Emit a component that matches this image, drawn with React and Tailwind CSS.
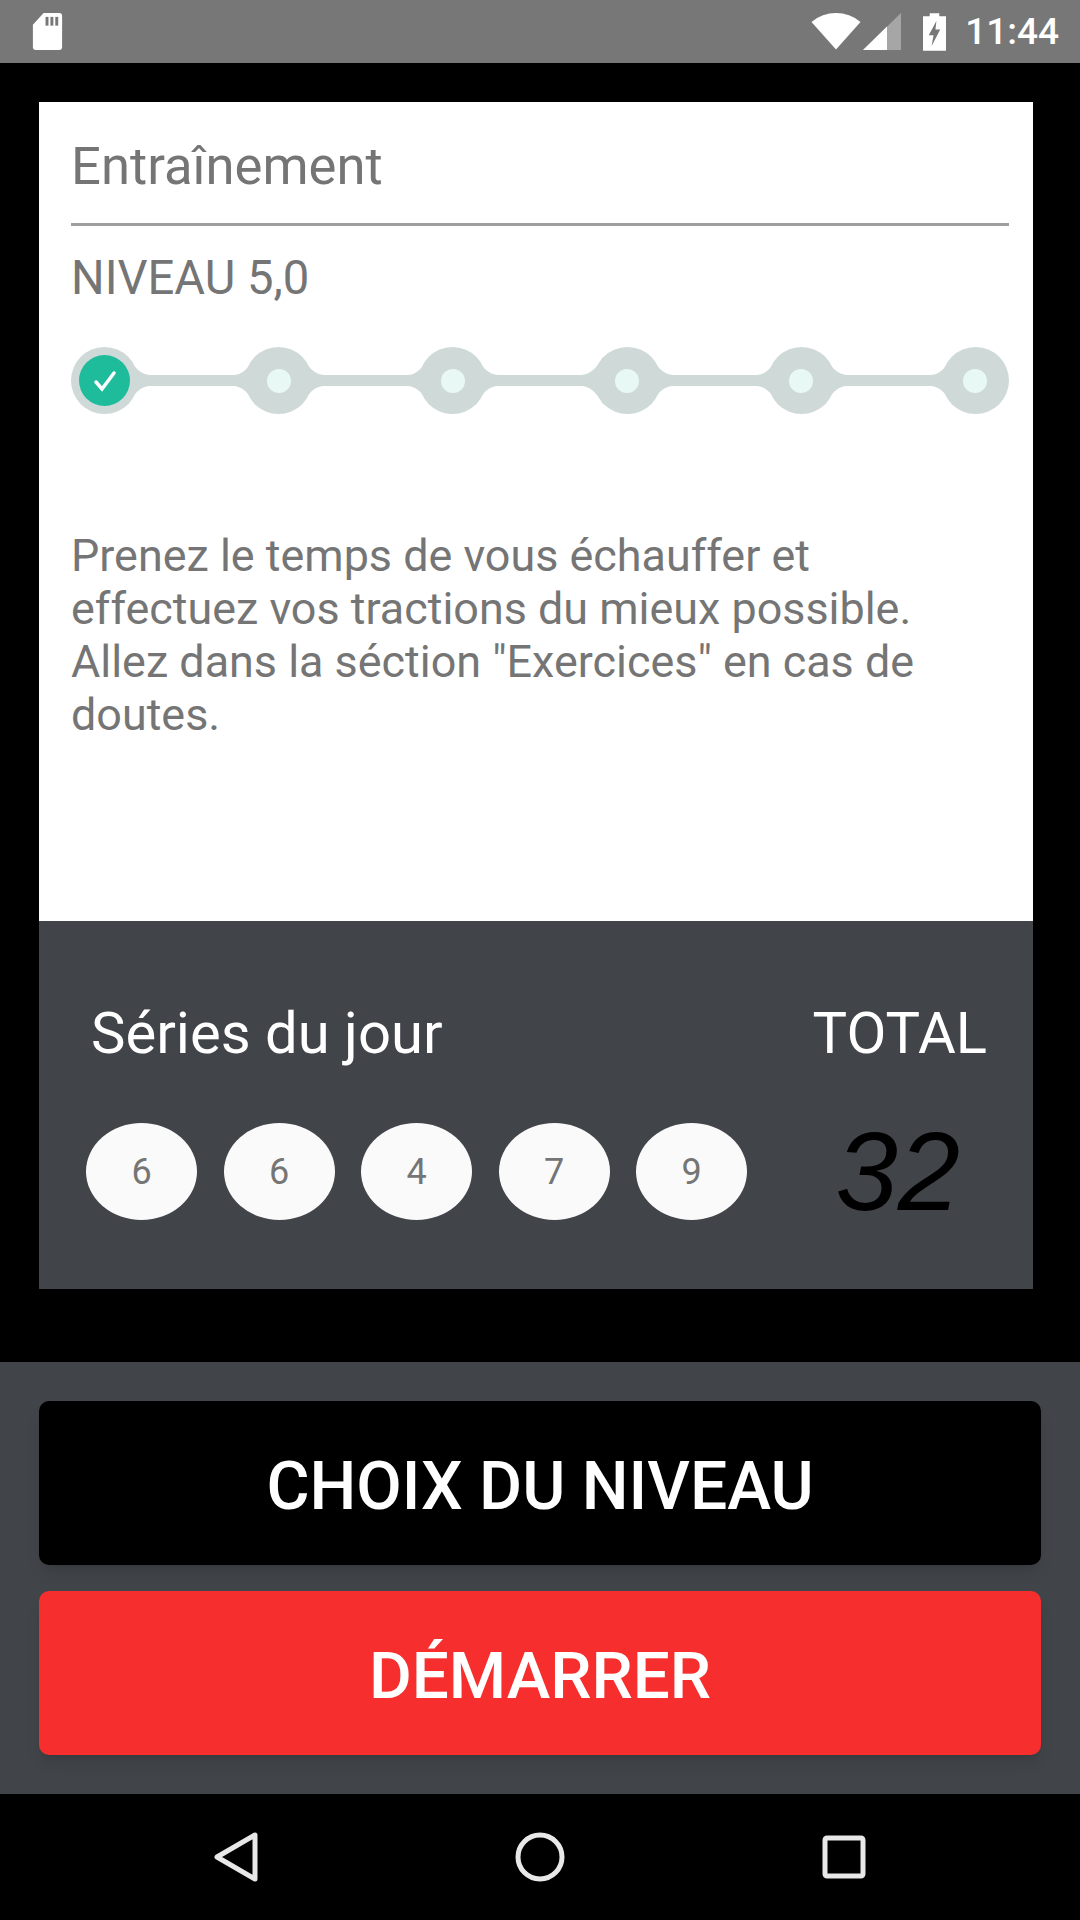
const roboto = "font-['Roboto','Liberation_Sans',sans-serif]";

function Status() {
  return (
    <div className="h-[63px] bg-[#777777] flex items-center justify-between pl-[32px] pr-[21px]">
      <svg width="31" height="37" viewBox="0 0 30 38">
        <path d="M11 0H27a3 3 0 0 1 3 3V35a3 3 0 0 1-3 3H3a3 3 0 0 1-3-3V12Z" fill="#fff" />
        <rect x="13" y="4" width="3" height="9" fill="#777" />
        <rect x="18" y="4" width="3" height="9" fill="#777" />
        <rect x="23" y="4" width="3" height="9" fill="#777" />
      </svg>
      <div className="flex items-center">
        <svg width="50" height="37" viewBox="0 0 50 37">
          <path d="M25 36.5 L0.5 9 A38 38 0 0 1 49.5 9 Z" fill="#fff" />
        </svg>
        <svg width="38" height="37" viewBox="0 0 38 37" className="ml-[2px]">
          <path d="M38 0V37H0Z" fill="#a6a6a6" />
          <path d="M24 13.5V37H0Z" fill="#fff" />
        </svg>
        <svg width="23" height="38" viewBox="0 0 24 39" className="ml-[22px]">
          <path d="M7 0H17V3H24V39H0V3H7Z" fill="#fff" />
          <path d="M14 8L6 23H11L9 34L18 17H13Z" fill="#777" />
        </svg>
        <span className={`${roboto} text-white text-[37px] leading-none font-medium ml-[19px]`}>11:44</span>
      </div>
    </div>
  );
}

function Step({ done }) {
  return (
    <div className="relative w-[67px] h-[67px] rounded-full bg-[#cfdad8] flex items-center justify-center shrink-0">
      {done ? (
        <div className="w-[51px] h-[51px] rounded-full bg-[#1fbc9c] flex items-center justify-center">
          <svg width="24" height="24" viewBox="0 0 24 24" fill="none" stroke="#fff" strokeWidth="3.5" strokeLinecap="round">
            <path d="M3 13L9 20L21 4" />
          </svg>
        </div>
      ) : (
        <div className="w-[24px] h-[24px] rounded-full bg-[#e8f8f5]" />
      )}
    </div>
  );
}

function Connector() {
  return (
    <svg width="127.2" height="67" viewBox="0 0 127.2 67" className="shrink-0 mx-[-10px]">
      <path
        d="M0 9.6Q10 28 22 28H105.2Q117.2 28 127.2 9.6V57.4Q117.2 39 105.2 39H22Q10 39 0 57.4Z"
        fill="#cfdad8"
      />
    </svg>
  );
}

function Ball({ n }) {
  return (
    <div className={`${roboto} w-[111px] h-[97px] rounded-[50%] bg-[#fafafa] text-[#757575] text-[36px] flex items-center justify-center`}>
      {n}
    </div>
  );
}

export default function App() {
  return (
    <div className={`${roboto} w-[1080px] h-[1920px] bg-black flex flex-col`}>
      <Status />
      <div className="flex-1 pt-[39px] pl-[39px] pr-[47px]">
        <div className="h-[819px] bg-white pl-[32px] pr-[24px] flex flex-col">
          <div className="text-[52.6px] leading-[61px] text-[#757575] pt-[34px] h-[124px] border-b-[3px] border-[#9e9e9e]">
            Entraînement
          </div>
          <div className="text-[47.2px] leading-[52px] text-[#757575] mt-[26px]">NIVEAU 5,0</div>
          <div className="flex items-center mt-[43px]">
            <Step done />
            {[0, 1, 2, 3, 4].map((i) => (
              <div key={i} className="contents">
                <Connector />
                <Step />
              </div>
            ))}
          </div>
          <p className="text-[44.9px] leading-[53px] text-[#757575] mt-[115px]">
            Prenez le temps de vous échauffer et
            <br />
            effectuez vos tractions du mieux possible.
            <br />
            Allez dans la séction "Exercices" en cas de
            <br />
            doutes.
          </p>
        </div>
        <div className="h-[368px] bg-[#414449] pl-[47px] pr-[46px] pt-[80px] flex justify-between">
          <div>
            <div className="text-[58px] leading-[64px] text-white pl-[5px]">Séries du jour</div>
            <div className="flex gap-[26.5px] mt-[58px]">
              {[6, 6, 4, 7, 9].map((n, i) => (
                <Ball key={i} n={n} />
              ))}
            </div>
          </div>
          <div className="flex flex-col items-center">
            <div className="text-[58px] leading-[64px] text-white">TOTAL</div>
            <div className="font-['Liberation_Sans',sans-serif] italic text-[112px] leading-[112px] text-black mt-[51px] pr-[4px]">32</div>
          </div>
        </div>
      </div>
      <div className="h-[432px] bg-[#414449] px-[39px] pt-[39px] flex flex-col gap-[26px]">
        <div className="h-[164px] pt-[7px] bg-black rounded-[10px] shadow-lg flex items-center justify-center text-white text-[66px] font-medium">CHOIX DU NIVEAU</div>
        <div className="h-[164px] pt-[7px] bg-[#f72e2e] rounded-[10px] shadow-lg flex items-center justify-center text-white text-[65.6px] font-medium">DÉMARRER</div>
      </div>
      <div className="h-[126px] bg-black flex items-center justify-between pl-[214px] pr-[214px]">
        <svg width="44" height="50" viewBox="0 0 44 50" fill="none" stroke="#e8e8e8" strokeWidth="5" strokeLinejoin="round"><path d="M41 3V47L3 25Z" /></svg>
        <svg width="50" height="50" viewBox="0 0 50 50" fill="none" stroke="#e8e8e8" strokeWidth="5"><circle cx="25" cy="25" r="22" /></svg>
        <svg width="44" height="44" viewBox="0 0 44 44" fill="none" stroke="#e8e8e8" strokeWidth="5" strokeLinejoin="round"><rect x="3" y="3" width="38" height="38" rx="2" /></svg>
      </div>
    </div>
  );
}
